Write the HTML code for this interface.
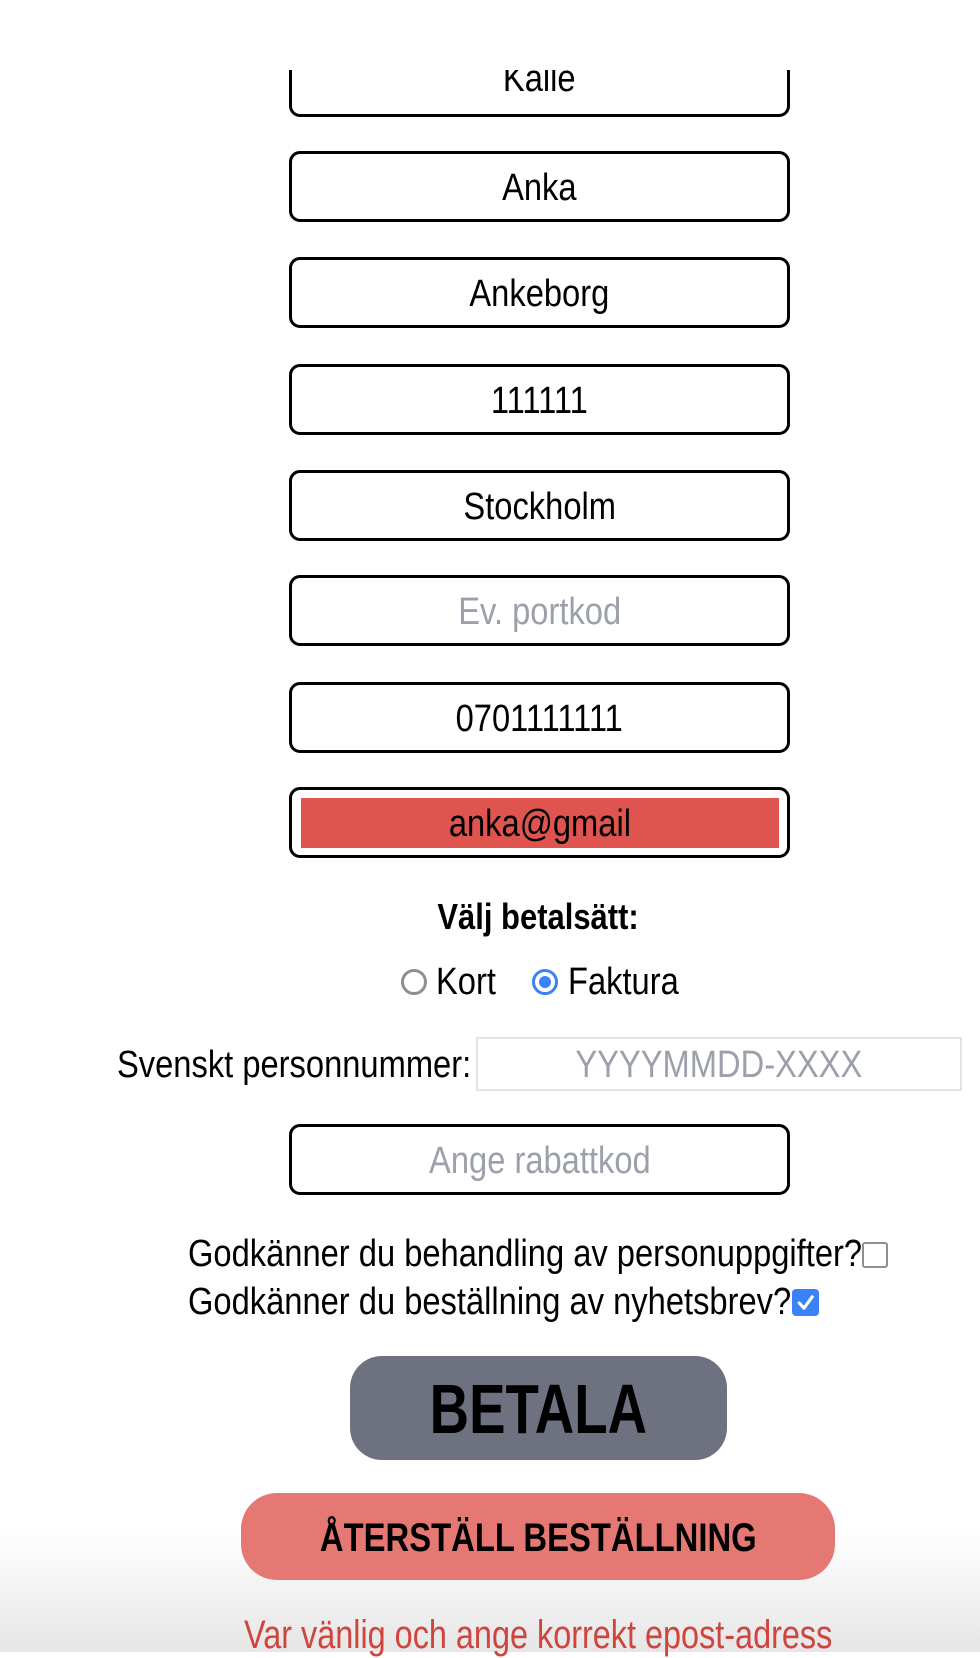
<!DOCTYPE html>
<html><head><meta charset="utf-8"><style>
html,body{margin:0;padding:0;}
body{width:980px;height:1652px;position:relative;overflow:hidden;background:#fff;font-family:"Liberation Sans",sans-serif;color:#000;}
.bg{position:absolute;left:0;top:1530px;width:980px;height:122px;background:linear-gradient(#fff,#e6e6e6);}
.box{position:absolute;left:289px;width:495px;height:65px;border:3px solid #000;border-radius:11px;text-align:center;line-height:68px;font-size:38px;box-sizing:content-box;}
.t{position:absolute;white-space:nowrap;}
.s{display:inline-block;transform:scaleX(.86);transform-origin:center;}
.l{display:inline-block;transform:scaleX(.86);transform-origin:left;}
.ph{color:#9ca0ab;}
</style></head><body>
<div class="bg"></div>
<div style="position:absolute;left:0;top:70px;width:980px;height:60px;overflow:hidden;">
 <div class="box" style="top:-24px;line-height:60px;"><span class="s">Kalle</span></div>
</div>
<div class="box" style="top:151px;"><span class="s">Anka</span></div>
<div class="box" style="top:257px;"><span class="s">Ankeborg</span></div>
<div class="box" style="top:364px;"><span class="s">111111</span></div>
<div class="box" style="top:470px;"><span class="s">Stockholm</span></div>
<div class="box ph" style="top:575px;"><span class="s">Ev. portkod</span></div>
<div class="box" style="top:682px;"><span class="s">0701111111</span></div>
<div class="box" style="top:787px;">
 <div style="position:absolute;left:9px;top:8px;width:478px;height:50px;background:#df544f;line-height:52px;"><span class="s">anka@gmail</span></div>
</div>
<div class="t" style="left:0;width:1076px;text-align:center;top:895px;font-size:36px;line-height:44px;font-weight:bold;"><span class="s">Välj betalsätt:</span></div>
<div style="position:absolute;left:401px;top:969px;width:20px;height:20px;border:3px solid #8e8e96;border-radius:50%;"></div>
<div class="t" style="left:436px;top:960px;font-size:38px;line-height:44px;"><span class="l">Kort</span></div>
<div style="position:absolute;left:532px;top:969px;width:20px;height:20px;border:3px solid #3b82f6;border-radius:50%;"><div style="position:absolute;left:4px;top:4px;width:12px;height:12px;border-radius:50%;background:#3b82f6;"></div></div>
<div class="t" style="left:568px;top:960px;font-size:38px;line-height:44px;"><span class="l">Faktura</span></div>
<div class="t" style="left:117px;top:1043px;font-size:38px;line-height:44px;"><span class="l">Svenskt personnummer:</span></div>
<div style="position:absolute;left:476px;top:1037px;width:482px;height:50px;border:2px solid #e2e3e7;text-align:center;line-height:52px;font-size:38px;color:#9ca0ab;"><span class="s">YYYYMMDD-XXXX</span></div>
<div class="box ph" style="top:1124px;"><span class="s">Ange rabattkod</span></div>
<div class="t" style="left:188px;top:1232px;font-size:38px;line-height:44px;"><span class="l">Godkänner du behandling av personuppgifter?</span></div>
<div style="position:absolute;left:862px;top:1242px;width:22px;height:22px;border:2.5px solid #8e8e96;border-radius:3px;"></div>
<div class="t" style="left:188px;top:1280px;font-size:38px;line-height:44px;"><span class="l">Godkänner du beställning av nyhetsbrev?</span></div>
<div style="position:absolute;left:792px;top:1289px;width:27px;height:27px;background:#3b82f6;border-radius:4px;">
<svg width="27" height="27" viewBox="0 0 26 26"><path d="M7 13.5l4.5 5 8-11" stroke="#fff" stroke-width="3" fill="none" stroke-linecap="round" stroke-linejoin="round"/></svg></div>
<div style="position:absolute;left:350px;top:1356px;width:377px;height:104px;background:#6e717f;border-radius:32px;text-align:center;line-height:106px;font-size:70px;font-weight:bold;"><span class="s" style="transform:scaleX(.78)">BETALA</span></div>
<div style="position:absolute;left:241px;top:1493px;width:594px;height:87px;background:#e57873;border-radius:36px;text-align:center;line-height:90px;font-size:40px;font-weight:bold;"><span class="s" style="transform:scaleX(.82)">ÅTERSTÄLL BESTÄLLNING</span></div>
<div class="t" style="left:0;width:1076px;text-align:center;top:1612px;font-size:40px;line-height:46px;color:#d0443e;"><span class="s" style="transform:scaleX(.81)">Var vänlig och ange korrekt epost-adress</span></div>
</body></html>
